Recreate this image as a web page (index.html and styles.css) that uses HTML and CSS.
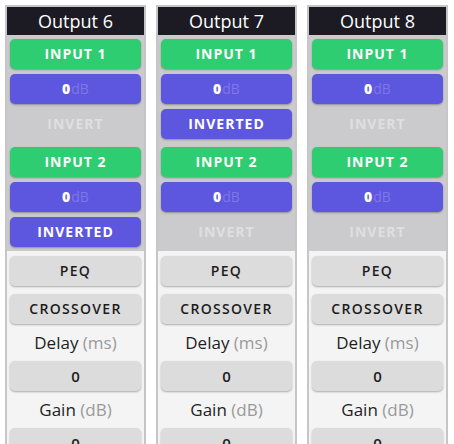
FILE: index.html
```html
<!DOCTYPE html>
<html>
<head>
<meta charset="utf-8">
<link rel="stylesheet" href="styles.css">
</head>
<body>
<div class="board">
  <div class="col">
    <div class="head">Output 6</div>
    <div class="routing">
      <div class="group">
        <div class="btn green">INPUT 1</div>
        <div class="btn purple"><b>0</b><span class="unit">dB</span></div>
        <div class="btn off">INVERT</div>
      </div>
      <div class="group">
        <div class="btn green">INPUT 2</div>
        <div class="btn purple"><b>0</b><span class="unit">dB</span></div>
        <div class="btn purple">INVERTED</div>
      </div>
    </div>
    <div class="settings">
      <div class="btn grey">PEQ</div>
      <div class="btn grey">CROSSOVER</div>
      <div class="label">Delay <span class="muted">(ms)</span></div>
      <div class="btn grey val">0</div>
      <div class="label">Gain <span class="muted">(dB)</span></div>
      <div class="btn grey val">0</div>
    </div>
  </div>
  <div class="col">
    <div class="head">Output 7</div>
    <div class="routing">
      <div class="group">
        <div class="btn green">INPUT 1</div>
        <div class="btn purple"><b>0</b><span class="unit">dB</span></div>
        <div class="btn purple">INVERTED</div>
      </div>
      <div class="group">
        <div class="btn green">INPUT 2</div>
        <div class="btn purple"><b>0</b><span class="unit">dB</span></div>
        <div class="btn off">INVERT</div>
      </div>
    </div>
    <div class="settings">
      <div class="btn grey">PEQ</div>
      <div class="btn grey">CROSSOVER</div>
      <div class="label">Delay <span class="muted">(ms)</span></div>
      <div class="btn grey val">0</div>
      <div class="label">Gain <span class="muted">(dB)</span></div>
      <div class="btn grey val">0</div>
    </div>
  </div>
  <div class="col">
    <div class="head">Output 8</div>
    <div class="routing">
      <div class="group">
        <div class="btn green">INPUT 1</div>
        <div class="btn purple"><b>0</b><span class="unit">dB</span></div>
        <div class="btn off">INVERT</div>
      </div>
      <div class="group">
        <div class="btn green">INPUT 2</div>
        <div class="btn purple"><b>0</b><span class="unit">dB</span></div>
        <div class="btn off">INVERT</div>
      </div>
    </div>
    <div class="settings">
      <div class="btn grey">PEQ</div>
      <div class="btn grey">CROSSOVER</div>
      <div class="label">Delay <span class="muted">(ms)</span></div>
      <div class="btn grey val">0</div>
      <div class="label">Gain <span class="muted">(dB)</span></div>
      <div class="btn grey val">0</div>
    </div>
  </div>
</div>
</body>
</html>
```

FILE: styles.css
```css
html, body {
  margin: 0;
  padding: 0;
  background: #ffffff;
  font-family: "Open Sans", "Noto Sans", sans-serif;
}
.board {
  display: flex;
  gap: 10px;
  padding: 5px;
  align-items: flex-start;
}
.col {
  width: 137px;
  border: 2px solid #c6c6c8;
  display: flex;
  flex-direction: column;
  flex: none;
}
.head {
  height: 28px;
  background: #1c1b24;
  color: #ffffff;
  font-size: 18px;
  line-height: 28px;
  text-align: center;
}
.routing {
  background: #cbcbcd;
  padding: 4px 3px 4px;
  display: flex;
  flex-direction: column;
  gap: 8px;
}
.group {
  display: flex;
  flex-direction: column;
  gap: 5px;
}
.btn {
  height: 30px;
  line-height: 30px;
  border-radius: 5px;
  text-align: center;
  font-size: 14px;
  font-weight: 700;
  letter-spacing: 1px;
  color: #ffffff;
  box-shadow: 0 1px 2px rgba(0, 0, 0, 0.3);
}
.green { background: #2ecd71; }
.purple { background: #5d56df; }
.purple b { font-weight: 800; }
.unit {
  color: #7d77e8;
  font-weight: 400;
  letter-spacing: 0;
}
.off {
  background: transparent;
  box-shadow: none;
  color: #dfdfe1;
}
.settings {
  background: #f4f4f4;
  padding: 5px 3px 0;
  display: flex;
  flex-direction: column;
}
.grey {
  background: #dcdcdc;
  color: #1c1c1c;
  font-weight: 600;
  letter-spacing: 1.3px;
}
.settings .grey + .grey { margin-top: 8px; }
.val { letter-spacing: 0; font-weight: 600; font-size: 15px; }
.label {
  height: 37px;
  line-height: 37px;
  text-align: center;
  font-size: 17px;
  color: #1e1e1e;
}
.muted { color: #9a9a9a; }
```
